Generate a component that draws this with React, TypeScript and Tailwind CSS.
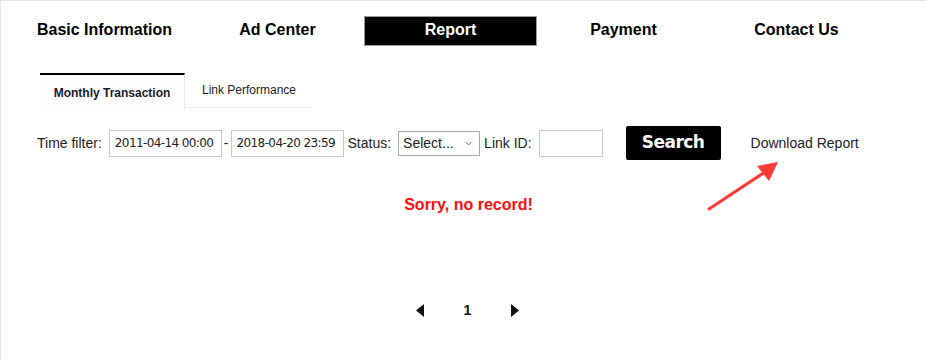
import { ChevronDown } from 'lucide-react';

const navItems = ['Basic Information', 'Ad Center', 'Report', 'Payment', 'Contact Us'];

const App = () => {
  return (
    <div className="relative w-[926px] h-[360px] bg-white border-l border-t border-[#e6e6e6] font-['Liberation_Sans',Arial,sans-serif] text-[#111] overflow-hidden">
      {/* Top navigation */}
      <div className="pt-[15px] pl-[17px] flex">
        {navItems.map((item) => (
          <div
            key={item}
            className={`w-[173px] h-[30px] flex items-center justify-center pb-[3px] text-[16px] font-bold ${
              item === 'Report' ? 'bg-black text-white border border-[#999]' : 'text-black'
            }`}
          >
            {item}
          </div>
        ))}
      </div>

      {/* Tabs */}
      <div className="mt-[27px] ml-[39px] flex items-start">
        <div className="w-[145px] h-[37px] border-t-2 border-black border-r border-r-[#e8e8e8] bg-[#fcfcfc] flex items-center justify-center text-[12px] font-bold text-[#1a1a2a]">
          Monthly Transaction
        </div>
        <div className="w-[128px] h-[35px] border-b border-[#eeeeee] flex items-center justify-center text-[12px] text-[#222]">
          Link Performance
        </div>
      </div>

      {/* Filter row */}
      <div className="mt-[16px] ml-[36px] flex items-center text-[14px] text-[#222]">
        <span className="mr-[7px]">Time filter:</span>
        <div className="w-[113px] h-[27px] border border-[#c8c8c8] flex items-center pl-[5px] text-[12px] font-['DejaVu_Sans',Tahoma,sans-serif] tracking-[-0.6px]">
          2011-04-14 00:00
        </div>
        <span className="mx-[2px]">-</span>
        <div className="w-[113px] h-[27px] border border-[#c8c8c8] flex items-center pl-[5px] text-[12px] font-['DejaVu_Sans',Tahoma,sans-serif] tracking-[-0.6px]">
          2018-04-20 23:59
        </div>
        <span className="ml-[4px] mr-[7px]">Status:</span>
        <div className="w-[82px] h-[25px] border border-[#a8a8a8] flex items-center justify-between pl-[4px] pr-[5px] text-[14px]">
          <span>Select...</span>
          <ChevronDown size={11} strokeWidth={2} className="text-[#555]" />
        </div>
        <span className="ml-[4px] mr-[7px]">Link ID:</span>
        <div className="w-[64px] h-[27px] border border-[#c8c8c8]" />
        <button className="ml-[23px] w-[95px] h-[34px] bg-black text-white rounded-[2px] text-[17px] font-bold font-['DejaVu_Sans',Tahoma,sans-serif] tracking-[-0.5px]">
          Search
        </button>
        <span className="ml-[30px] text-[#222]">Download Report</span>
      </div>

      {/* Empty state */}
      <div className="mt-[33px] text-center text-[16px] font-bold text-[#ff0d0d] pl-[10px]">
        Sorry, no record!
      </div>

      {/* Annotation arrow */}
      <svg className="absolute left-[700px] top-[150px]" width="90" height="65" viewBox="0 0 90 65">
        <path d="M8 58 L64 21" stroke="#ff3838" strokeWidth="3" strokeLinecap="round" />
        <path d="M77 11 L56 15 L68 30 Z" fill="#ff3838" />
      </svg>

      {/* Pagination */}
      <div className="mt-[83px] flex items-center justify-center gap-[40px] pl-[8px] text-[14px] font-bold">
        <svg width="8" height="13" viewBox="0 0 8 13">
          <path d="M8 0 L0 6.5 L8 13 Z" fill="#111" />
        </svg>
        <span>1</span>
        <svg width="8" height="13" viewBox="0 0 8 13">
          <path d="M0 0 L8 6.5 L0 13 Z" fill="#111" />
        </svg>
      </div>
    </div>
  );
};

export default App;
